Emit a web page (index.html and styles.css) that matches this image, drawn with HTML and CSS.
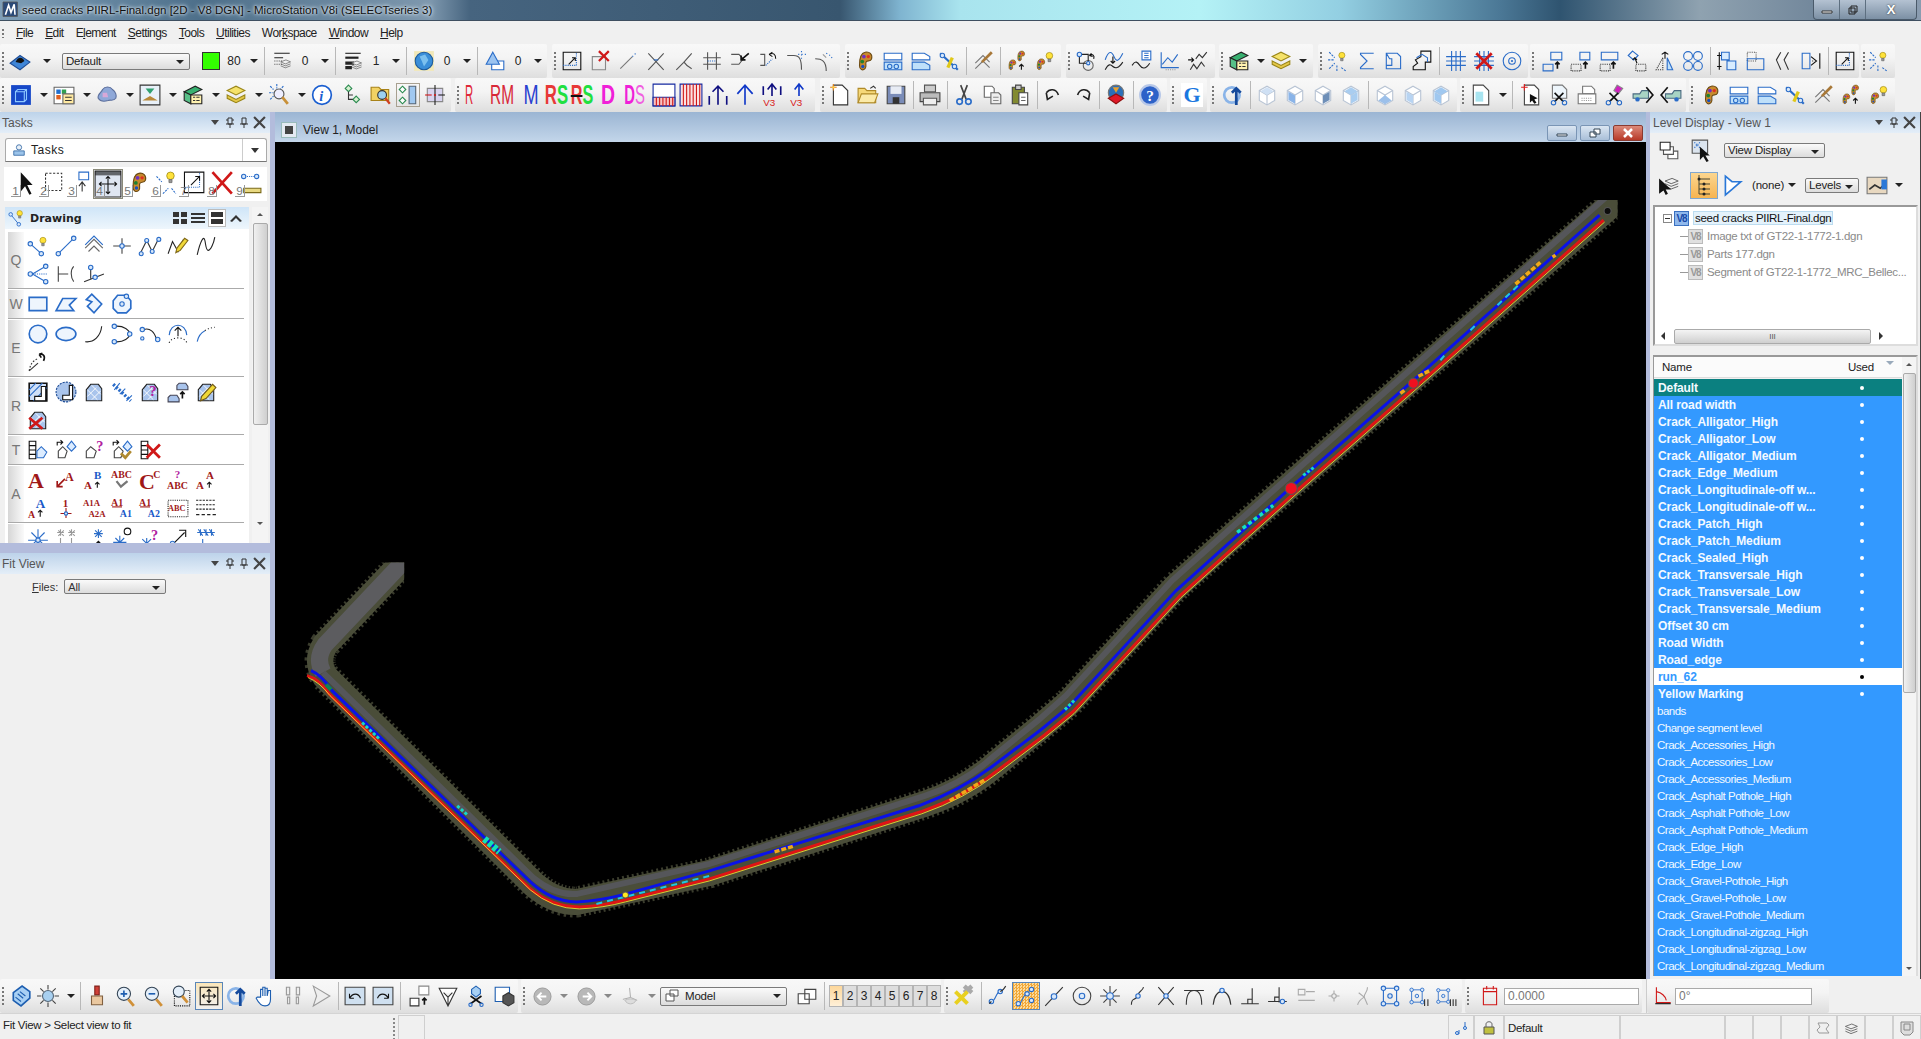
FILE: index.html
```html
<!DOCTYPE html>
<html lang="en">
<head>
<meta charset="utf-8">
<title>MicroStation V8i</title>
<link rel="stylesheet" href="styles.css">
</head>
<body>
<svg class="defs" aria-hidden="true">
  <symbol id="lay" viewBox="0 0 20 20"><path class="fl" d="M3 8l8-3 7 3-8 3z"/><path d="M3 11l7 3 8-3M3 14l7 3 8-3"/></symbol>
  <symbol id="pal" viewBox="0 0 20 20"><path fill="#c88a2c" stroke="#6b4a14" d="M10 2c4-1 7 2 6 6-1 3-4 1-5 3s1 4-1 6-5 1-5-3 0-11 5-12z"/><circle cx="9" cy="6" r="1.7" fill="#7030c0" stroke="none"/><circle cx="13" cy="6" r="1.5" fill="#e03020" stroke="none"/><circle cx="7.500" cy="10.500" r="1.700" fill="#208030" stroke="none"/><circle cx="8" cy="15" r="1.500" fill="#1850c0" stroke="none"/></symbol>
  <symbol id="bulb" viewBox="0 0 20 20"><circle cx="10" cy="7" r="5" fill="#ffe23a" stroke="#9a8410"/><path fill="#999" stroke="#666" d="M8 12h4v4H8z"/></symbol>
  <symbol id="cube" viewBox="0 0 20 20"><path fill="#fff" stroke="#b8c4d4" d="M3 6l7-4 7 4v9l-7 4-7-4z"/><path stroke="#b8c4d4" d="M3 6l7 4 7-4M10 10v9"/></symbol>
  <symbol id="hat" viewBox="0 0 20 20"><path fill="#a9c4ec" stroke="#222" d="M3 18V8l4-5h7l3 4v11z"/><path stroke="#fff" stroke-width=".8" d="M4 8l9 9M8 4l8 8M4 14l8-8M8 17l8-8"/></symbol>
  <symbol id="dot" viewBox="0 0 20 20"><path class="u" d="M4 15C8 15 8 6 12 6"/><circle class="n" cx="4" cy="15" r="2"/><circle class="n" cx="12" cy="6" r="2"/></symbol>
  <symbol id="snapb" viewBox="0 0 20 20"><path class="u" d="M4 3h12v14H4z"/><circle class="n" cx="4" cy="3" r="2"/><circle class="n" cx="16" cy="3" r="2"/><circle class="n" cx="4" cy="17" r="2"/><circle class="n" cx="16" cy="17" r="2"/><circle class="n" cx="10" cy="10" r="2"/></symbol>
</svg>
<div class="app">

<header class="title">
  <svg class="logo" viewBox="0 0 20 20"><path fill="#2a4a78" d="M0 0h18v18H0z"/><path fill="none" stroke="#fff" stroke-width="2" d="M3 16 7 4l3 9 4-10 1 13"/></svg>
  <span class="title-text">seed cracks PIIRL-Final.dgn [2D - V8 DGN] - MicroStation V8i (SELECTseries 3)</span>
  <div class="win-btns">
    <span class="wb"><svg viewBox="0 0 12 10"><path fill="#fff" stroke="#333" d="M1 6h10v2H1z"/></svg></span>
    <span class="wb"><svg viewBox="0 0 12 10"><path fill="none" stroke="#222" d="M4 1h6v6H4zM2 3h6v6H2z"/></svg></span>
    <span class="wb wb-x">X</span>
  </div>
</header>

<nav class="menu">
  <i class="grip"></i>
  <span><u>F</u>ile</span><span><u>E</u>dit</span><span>E<u>l</u>ement</span><span><u>S</u>ettings</span><span><u>T</u>ools</span><span><u>U</u>tilities</span><span>Wor<u>k</u>space</span><span><u>W</u>indow</span><span><u>H</u>elp</span>
</nav>

<div class="tb">
  <div class="g g1">
    <i class="grip"></i>
    <i class="b"><svg viewBox="0 0 20 20"><path fill="#3f86d8" stroke="#1f4d96" d="M1 12 10 5l9 6-9 7z"/><path fill="#111" stroke="none" d="M6 11c2-5 6-5 8-1l-3 2z"/></svg></i>
    <i class="a m4"></i>
    <div class="combo w128">Default</div>
    <i class="sw"></i><span class="num n28">80</span><i class="a"></i><i class="sep"></i>
    <i class="b"><svg viewBox="0 0 20 20"><path d="M3 3h14M3 7h8" stroke="#222"/><path stroke-dasharray="1 1" d="M3 10h7M3 13h7"/><use href="#lay" x="7" y="6" width="12" height="12"/></svg></i><span class="num">0</span><i class="a"></i><i class="sep"></i>
    <i class="b"><svg viewBox="0 0 20 20"><path stroke="#222" d="M3 3h14"/><path stroke="#222" stroke-width="2" d="M3 7h12"/><path stroke="#222" stroke-width="3" d="M3 12h8M3 16h6"/><use href="#lay" x="7" y="7" width="12" height="12"/></svg></i><span class="num">1</span><i class="a"></i><i class="sep"></i>
    <i class="b"><svg viewBox="0 0 20 20"><path fill="#f2e8b8" stroke="none" d="M1 1h18v18H1z"/><circle cx="10" cy="10" r="8" fill="#3a8ed8" stroke="#1d5a9c"/><path fill="#7cc0ee" stroke="none" d="M6 6l5-2 3 5-4 6-2-5z"/></svg></i><span class="num">0</span><i class="a"></i><i class="sep"></i>
    <i class="b"><svg viewBox="0 0 20 20"><path fill="#fff" class="u" d="M7 10h11v8H7z"/><path fill="#9cc4f0" class="u" d="M8 2l6 11H2z"/></svg></i><span class="num">0</span><i class="a"></i>
  </div>
  <div class="g g2">
    <i class="grip"></i>
    <i class="b"><svg viewBox="0 0 20 20"><path stroke="#111" d="M2 2h16v16H2z"/><path stroke="#2a6cc8" stroke-dasharray="1 1" d="M2 14h12V2"/><path stroke="#111" d="M7 13l6-6M10 7h3v3"/></svg></i>
    <i class="b"><svg viewBox="0 0 20 20"><path stroke="#888" d="M3 6h12v12H3z"/><path stroke="#d01818" stroke-width="2" d="M9 1l9 9M18 1l-9 9"/></svg></i>
    <i class="b"><svg viewBox="0 0 20 20"><path stroke="#777" d="M3 17 14 6"/><path stroke="#2a6cc8" stroke-dasharray="1 2" d="M14 6l4-4"/></svg></i>
    <i class="b"><svg viewBox="0 0 20 20"><path stroke="#555" d="M3 3l14 15M17 3 3 18"/><path stroke="#2a6cc8" d="M8 9l4 0"/></svg></i>
    <i class="b"><svg viewBox="0 0 20 20"><path stroke="#555" d="M3 18 10 11M17 3l-7 8c2 3 5 5 7 6"/></svg></i>
    <i class="b"><svg viewBox="0 0 20 20"><path stroke="#555" d="M6 2v16M14 2v16M2 7h16M2 13h16"/><path stroke="#2a6cc8" stroke-dasharray="1 1" d="M6 10h8"/></svg></i>
    <i class="b"><svg viewBox="0 0 20 20"><path stroke="#555" d="M2 4h7l4 4-4 5H2"/><path stroke="#111" stroke-width="1.500" d="M18 3l-7 6M11 5v4h4"/></svg></i>
    <i class="b"><svg viewBox="0 0 20 20"><path stroke="#555" d="M3 4h4v10H3"/><path stroke="#2a6cc8" stroke-dasharray="1 1" d="M8 14l6-6"/><path stroke="#111" d="M11 4c4-2 6 0 6 4M11 4l3-2M11 4l3 2"/></svg></i>
    <i class="b"><svg viewBox="0 0 20 20"><path stroke="#555" d="M2 5h6c5 0 7 3 7 13"/><path stroke="#2a6cc8" stroke-dasharray="1 2" d="M15 1v7M12 4h7"/></svg></i>
    <i class="b"><svg viewBox="0 0 20 20"><path stroke="#555" d="M2 8c6 0 10 2 10 11"/><path stroke="#2a6cc8" stroke-dasharray="1 2" d="M12 3c3 1 5 3 6 6"/><path stroke="#999" d="M9 4l3 3"/></svg></i>
  </div>
  <div class="g g3">
    <i class="grip"></i>
    <i class="b"><svg viewBox="0 0 20 20"><use href="#pal"/></svg></i>
    <i class="b"><svg viewBox="0 0 20 20"><path class="u" fill="#fff" d="M2 3h16v6H2z"/><path class="u" fill="#bfe0fa" d="M2 11h16v7H2z"/><circle class="u" cx="7" cy="15" r="2"/><circle class="u" cx="13" cy="15" r="2"/></svg></i>
    <i class="b"><svg viewBox="0 0 20 20"><path class="u" fill="#fff" d="M2 3h11l5 3v3H2z"/><path class="u" fill="#bfe0fa" d="M2 11h11l5 3v4H2z"/></svg></i>
    <i class="b"><svg viewBox="0 0 20 20"><path stroke="#2a6cc8" stroke-width="2" d="M2 3l16 15"/><path stroke="#e0c818" stroke-width="3" d="M13 7l-4 9"/><circle class="n" cx="4" cy="5" r="2"/><circle class="n" cx="15" cy="15" r="2"/></svg></i>
    <i class="sep s3"></i>
    <i class="b"><svg viewBox="0 0 20 20"><path stroke="#777" d="M3 12l7-7 6 6M3 17l7-7 6 6"/><path stroke="#a87838" stroke-width="2.500" d="M18 2 9 11"/></svg></i>
    <i class="sep s3"></i>
    <i class="b"><svg viewBox="0 0 20 20"><use href="#pal" x="8" y="0" width="11" height="11"/><use href="#pal" x="0" y="8" width="11" height="11"/><path stroke="#111" d="M14 18v-5M12 15l2-2 2 2"/></svg></i>
    <i class="b"><svg viewBox="0 0 20 20"><use href="#pal" x="0" y="7" width="12" height="12"/><use href="#bulb" x="8" y="0" width="12" height="14"/></svg></i>
  </div>
  <div class="g g4">
    <i class="grip"></i>
    <i class="b"><svg viewBox="0 0 20 20"><circle cx="12" cy="14" r="4.500" stroke="#666"/><path stroke="#222" d="M4 4h8v8H4z"/><circle class="n" cx="4" cy="4" r="2"/><circle class="n" cx="12" cy="12" r="1.500"/><path stroke="#111" d="M13 5c3-2 5 0 4 3M13 5l2-2M13 5l3 1"/></svg></i>
    <i class="b"><svg viewBox="0 0 20 20"><path class="u" d="M2 9c3-9 6-8 8-3s4 5 8-3"/><path stroke="#222" d="M2 18c3-6 5-5 7-3s5 2 9-4"/><path stroke="#111" d="M9 6v6M7 10l2 2 2-2"/></svg></i>
    <i class="b"><svg viewBox="0 0 20 20"><path class="u" fill="#fff" d="M10 1h8v8h-8z"/><path class="u" d="M12 3h4M12 5h4M12 7h4"/><path stroke="#222" d="M1 14c3-5 5-3 7 0s5 4 9-2"/></svg></i>
    <i class="b"><svg viewBox="0 0 20 20"><path class="u" d="M2 2v14h16"/><path class="u" d="M3 13l5-6 4 4 5-7"/><path stroke="#999" stroke-dasharray="1 1" d="M6 18h9"/></svg></i>
    <i class="b"><svg viewBox="0 0 20 20"><path stroke="#333" d="M3 18l3-5 3 4 4-6 3 4M8 8l3-4 3 3 4-5"/><path stroke="#111" d="M1 9h5M4 7l2 2-2 2"/></svg></i>
  </div>
  <div class="g g5">
    <i class="grip"></i>
    <i class="b"><svg viewBox="0 0 20 20"><path fill="#38b070" stroke="#222" d="M2 7l10-5 6 3-10 5z"/><path fill="#58c088" stroke="#222" d="M2 7l6 3v8l-6-3z"/><path fill="#fff2b0" stroke="#222" d="M8 10h10v8H8z"/><path stroke="#333" d="M10 12h2M10 15h2M13 12h3M13 15h3"/></svg></i>
    <i class="a"></i>
    <i class="b"><svg viewBox="0 0 20 20"><path fill="#f5e26a" stroke="#9a8618" d="M2 6l8-4 8 4-8 4z"/><path fill="#e5c848" stroke="#9a8618" d="M2 10l8 4 8-4v3l-8 4-8-4z"/></svg></i>
    <i class="a"></i>
  </div>
  <div class="g g6">
    <i class="grip"></i>
    <i class="b"><svg viewBox="0 0 20 20"><use href="#bulb" x="8" y="0" width="11" height="13"/><path class="u" stroke-dasharray="2 1" d="M2 2l5 5M1 9h5M2 17l5-5M9 14v5M13 16l4 3"/></svg></i>
    <i class="b"><svg viewBox="0 0 20 20"><path class="u" d="M17 3H5v1l6 6-6 6v1h12"/></svg></i>
    <i class="b"><svg viewBox="0 0 20 20"><path class="u" d="M3 3h10l3 3v11H3zM3 3l3 5h2v6H3"/></svg></i>
    <i class="b"><svg viewBox="0 0 20 20"><path stroke="#111" d="M9 1h9v10h-5v7H2v-3l4-3-2-3 5-3z"/><path class="u" d="M5 7l5-3 5 3v4"/></svg></i>
    <i class="sep s3"></i>
    <i class="b"><svg viewBox="0 0 20 20"><path class="u" d="M6 1v18M10 1v18M14 1v18M1 6h18M1 10h18M1 14h18"/></svg></i>
    <i class="b"><svg viewBox="0 0 20 20"><path class="u" d="M6 1v18M10 1v18M14 1v18M1 6h18M1 10h18M1 14h18"/><path stroke="#d01818" stroke-width="2.500" d="M3 3l14 14M17 3 3 17"/></svg></i>
    <i class="b"><svg viewBox="0 0 20 20"><circle class="u" cx="10" cy="10" r="8"/><circle class="u" cx="10" cy="10" r="3"/><circle cx="10" cy="10" r="1" fill="#2a6cc8" stroke="none"/></svg></i>
  </div>
  <div class="g g7">
    <i class="grip"></i>
    <i class="b"><svg viewBox="0 0 20 20"><path class="u" d="M8 2h10v7H8zM1 13h9v6H1z"/><path stroke="#111" stroke-width="1.500" d="M14 17v-6M12 13l2-2 2 2"/></svg></i>
    <i class="b"><svg viewBox="0 0 20 20"><path class="u" d="M9 2h9v7H9z"/><path stroke="#333" stroke-dasharray="1 1" d="M1 13h9v6H1z"/><path stroke="#111" stroke-width="1.500" d="M14 17v-6M12 13l2-2 2 2"/></svg></i>
    <i class="b"><svg viewBox="0 0 20 20"><path class="u" d="M3 2h15v7H3z"/><path stroke="#333" stroke-dasharray="1 1" d="M2 13h9v6H2z"/><path stroke="#111" stroke-width="1.500" d="M14 17v-6M12 13l2-2 2 2"/></svg></i>
    <i class="b"><svg viewBox="0 0 20 20"><path class="u" d="M6 1l5 4-4 4-5-4z"/><path stroke="#333" stroke-dasharray="1 1" d="M9 13h9v6H9z"/><path stroke="#111" d="M10 12 8 7M6 9l2-2 2 2"/></svg></i>
    <i class="b"><svg viewBox="0 0 20 20"><path class="u" fill="#bfe0fa" d="M12 7l5 11h-5z"/><path stroke="#333" stroke-dasharray="1 1" d="M8 7 2 18h6z"/><path stroke="#111" d="M10 8V2M7 4l3-2 3 2"/></svg></i>
    <i class="b"><svg viewBox="0 0 20 20"><circle class="u" cx="5.500" cy="5.500" r="4"/><circle class="u" cx="14.500" cy="5.500" r="4"/><circle class="u" cx="5.500" cy="14.500" r="4"/><circle class="u" cx="14.500" cy="14.500" r="4"/></svg></i>
    <i class="sep s3"></i>
    <i class="b"><svg viewBox="0 0 20 20"><path stroke="#111" d="M3 2v16M1 5h4M1 15h4"/><path class="u" fill="#d8ecff" d="M5 2h7v7H5zM10 10h8v8h-8z"/></svg></i>
    <i class="b"><svg viewBox="0 0 20 20"><path stroke="#555" stroke-dasharray="1 1" d="M3 2h8v8H3z"/><path class="u" d="M3 8h15v10H3z"/></svg></i>
    <i class="b"><svg viewBox="0 0 20 20"><path stroke="#333" d="M8 2 4 9l4 9M15 2l-4 7 4 9"/></svg></i>
    <i class="b"><svg viewBox="0 0 20 20"><path class="u" d="M2 3h7v14H2z"/><path stroke="#333" stroke-dasharray="1 1" d="M11 10h1"/><path stroke="#111" d="M18 3v14M10 6l5 4-5 4"/></svg></i>
    <i class="sep s3"></i>
    <i class="b"><svg viewBox="0 0 20 20"><path stroke="#111" d="M2 2h16v16H2z"/><path stroke="#2a6cc8" stroke-dasharray="1 1" d="M2 14h12V2"/><path stroke="#111" d="M7 13l6-6M10 7h3v3"/></svg></i>
  </div>
  <div class="g g8">
    <i class="grip"></i>
    <i class="b"><svg viewBox="0 0 20 20"><use href="#bulb" x="8" y="0" width="11" height="13"/><path class="u" stroke-dasharray="2 1" d="M2 2l5 5M1 9h5M2 17l5-5M9 14v5M13 16l4 3"/></svg></i>
  </div>
</div>

<div class="tb">
  <div class="g h1">
    <i class="grip"></i>
    <i class="b"><svg viewBox="0 0 20 20"><path fill="#1648c8" stroke="none" d="M1 1h18v18H1z"/><path stroke="#8fc8ff" d="M5 7l2-2h8v9l-2 2H5zM5 7h8v9M13 7l2-2"/></svg></i>
    <i class="a"></i>
    <i class="b"><svg viewBox="0 0 20 20"><path fill="#fff" stroke="#666" d="M1 3h18v15H1z"/><path fill="#2070d0" stroke="none" d="M3 5h4v4H3z"/><path fill="#30a050" stroke="none" d="M8 5h4v4H8z"/><path fill="#e06020" stroke="none" d="M3 10h4v4H3z"/><path fill="#ffe9a0" stroke="#666" d="M9 9h10v9H9z"/><path stroke="#333" d="M11 12h6M11 15h6"/></svg></i>
    <i class="a"></i>
    <i class="b"><svg viewBox="0 0 20 20"><path fill="#8fa8d8" stroke="#5c6f9c" d="M2 13c-1-4 3-5 4-8 2-3 7-3 9 0 3 2 4 6 3 8-2 3-5 1-7 2-3 1-7 1-9-2z"/><path fill="#d8a8d8" stroke="none" d="M6 8h4l1 4H6z"/></svg></i>
    <i class="a"></i>
    <i class="b"><svg viewBox="0 0 20 20"><path fill="#e8f0f8" stroke="#333" d="M1 1h18v18H1z"/><path fill="#b88838" stroke="none" d="M3 15l7-4 7 4z"/><path fill="#30a070" stroke="none" d="M6 4h8l-4 5z"/></svg></i>
    <i class="a"></i>
    <i class="b"><svg viewBox="0 0 20 20"><path fill="#38b070" stroke="#222" d="M2 7l10-5 6 3-10 5z"/><path fill="#58c088" stroke="#222" d="M2 7l6 3v8l-6-3z"/><path fill="#fff2b0" stroke="#222" d="M8 10h10v8H8z"/><path stroke="#333" d="M10 12h2M10 15h2M13 12h3M13 15h3"/></svg></i>
    <i class="a"></i>
    <i class="b"><svg viewBox="0 0 20 20"><path fill="#f5e26a" stroke="#9a8618" d="M2 6l8-4 8 4-8 4z"/><path fill="#e5c848" stroke="#9a8618" d="M2 10l8 4 8-4v3l-8 4-8-4z"/></svg></i>
    <i class="a"></i>
    <i class="b"><svg viewBox="0 0 20 20"><path class="u" stroke-dasharray="2 1" d="M2 2l3 3M8 0v4M14 2l-3 3M1 8h4M2 14l3-3"/><circle cx="10" cy="9" r="4.500" stroke="#555" fill="#eef"/><path stroke="#c89038" stroke-width="2.500" d="M13 12l5 6"/></svg></i>
    <i class="a"></i>
    <i class="b"><svg viewBox="0 0 20 20"><circle cx="10" cy="10" r="8.500" stroke="#1a5ed0" stroke-width="1.500" fill="#fff"/><text class="t ti" x="7.500" y="15" font-size="13" fill="#1a5ed0">i</text></svg></i>
    <i class="b nw nw1"><svg viewBox="0 0 20 20"><path stroke="#2a8a50" fill="#d8f0d0" d="M5 1l3 3-3 3-3-3zM12 11l3 3-3 3-3-3z"/><path stroke="#333" d="M5 7v7h4M5 10h4"/></svg></i>
    <i class="b nw"><svg viewBox="0 0 20 20"><path fill="#f2d264" stroke="#a88218" d="M1 3h7l2 2h7v10H1z"/><circle cx="11" cy="10" r="4" fill="#9cd0f0" stroke="#333"/><path stroke="#d04020" stroke-width="2" d="M14 13l4 5"/></svg></i>
    <i class="b nw bx"><svg viewBox="0 0 20 20"><path fill="#fff" stroke="#2a8a50" d="M5 2l3 3-3 3-3-3zM5 12l3 3-3 3-3-3z"/><path fill="#a0c8f0" stroke="#567" d="M11 2h6v16h-6z"/></svg></i>
    <i class="b nw"><svg viewBox="0 0 20 20"><path fill="#d8d4f0" stroke="#888" d="M3 4h14v12H3z"/><path stroke="#222" d="M10 1v18"/><path stroke="#d01818" d="M1 10h6"/><path stroke="#222" d="M13 10h6"/><circle cx="10" cy="10" r="1" fill="#d01818" stroke="none"/></svg></i>
  </div>
  <div class="g h2">
    <i class="grip"></i>
    <span class="tx r1">R</span><span class="tx r2">RM</span><span class="tx r3">M</span><span class="tx r4"><em>R</em>S</span><span class="tx r5"><em class="slash">R</em>S</span><span class="tx r6">D</span><span class="tx r7"><em>D</em>S</span>
    <i class="b bl bl1"><svg viewBox="0 0 22 22"><path fill="#fff" stroke="#1428a0" d="M1 1h20v20H1z"/><path fill="#f8c0c0" stroke="#1428a0" d="M1 13h20v8H1z"/><path stroke="#d01818" d="M4 13v8M7 13v8M10 13v8M13 13v8M16 13v8M19 13v8"/></svg></i>
    <i class="b bl"><svg viewBox="0 0 22 22"><path fill="#fbe0e0" stroke="#1428a0" d="M1 1h20v20H1z"/><path stroke="#d01818" d="M4 1v20M7 1v20M10 1v20M13 1v20M16 1v20M19 1v20"/></svg></i>
    <i class="b bl"><svg viewBox="0 0 22 22"><path stroke="#101080" stroke-width="1.500" d="M11 20V3M6 8l5-5 5 5M3 12v8M19 12v8"/></svg></i>
    <i class="b bl"><svg viewBox="0 0 22 22"><path stroke="#1038c8" stroke-width="1.500" d="M11 20V2M4 10l7-8 7 8"/></svg></i>
    <i class="b bl"><svg viewBox="0 0 22 22"><path stroke="#101080" stroke-width="1.500" d="M11 12V1M7 6l4-5 4 5M3 3v8M19 3v8"/><text class="t rd" x="3" y="21" font-size="9">V3</text></svg></i>
    <i class="b bl"><svg viewBox="0 0 22 22"><path stroke="#1038c8" stroke-width="1.500" d="M11 12V1M7 6l4-5 4 5"/><text class="t rd" x="3" y="21" font-size="9">V3</text></svg></i>
  </div>
  <div class="g h3">
    <i class="grip"></i>
    <i class="b"><svg viewBox="0 0 20 20"><path fill="#fff" stroke="#333" d="M4 1h8l5 5v13H4z"/><path stroke="#e08020" d="M4 0v6M1 3h6"/><path fill="#ffd040" stroke="none" d="M3 2h2v2H3z"/></svg></i>
    <i class="b"><svg viewBox="0 0 20 20"><path fill="#f6d878" stroke="#b08a28" d="M1 4h6l2 2h8v11H1z"/><path fill="#fbeaa8" stroke="#b08a28" d="M1 17l3-8h15l-3 8z"/><path stroke="#333" d="M12 4l3-2 2 2"/></svg></i>
    <i class="b"><svg viewBox="0 0 20 20"><path fill="#7a8cb8" stroke="#444" d="M2 2h16v16H2z"/><path fill="#e8ecf4" stroke="none" d="M5 2h10v7H5z"/><path fill="#333" stroke="none" d="M7 12h6v6H7z"/></svg></i>
    <i class="sep s3"></i>
    <i class="b"><svg viewBox="0 0 20 20"><path fill="#ccc" stroke="#555" d="M5 1h10v6H5z"/><path fill="#bbb" stroke="#444" d="M1 8h18v8H1z"/><path fill="#eee" stroke="#555" d="M4 13h12v6H4z"/></svg></i>
    <i class="sep s3"></i>
    <i class="b"><svg viewBox="0 0 20 20"><path stroke="#444" stroke-width="1.500" d="M7 1l5 13M13 1 8 14"/><circle cx="6" cy="16" r="2.500" stroke="#2a6cc8" stroke-width="1.500"/><circle cx="14" cy="16" r="2.500" stroke="#2a6cc8" stroke-width="1.500"/></svg></i>
    <i class="b"><svg viewBox="0 0 20 20"><path fill="#fff" stroke="#666" d="M3 2h7l2 2v8H3z"/><path fill="#eee" stroke="#666" d="M9 8h7l2 2v8H9z"/><path stroke="#888" d="M11 12h5M11 15h5"/></svg></i>
    <i class="b"><svg viewBox="0 0 20 20"><path fill="#828a30" stroke="#444" d="M3 3h11v15H3z"/><path fill="#ccc" stroke="#444" d="M6 1h5v4H6z"/><path fill="#fff" stroke="#444" d="M9 8h8v11H9z"/><path stroke="#666" d="M11 12h4M11 15h4"/></svg></i>
    <i class="sep s3"></i>
    <i class="b"><svg viewBox="0 0 20 20"><path stroke="#222" stroke-width="1.500" d="M3 8c3-4 9-4 11 2M3 8l1 6 5-3"/></svg></i>
    <i class="b"><svg viewBox="0 0 20 20"><path stroke="#222" stroke-width="1.500" d="M17 8c-3-4-9-4-11 2M17 8l-1 6-5-3"/></svg></i>
    <i class="sep s3"></i>
    <i class="b"><svg viewBox="0 0 20 20"><circle cx="10" cy="8" r="7" fill="#2c6fb8" stroke="#777"/><path fill="#e8a030" stroke="none" d="M7 3h6l-3 5z"/><path fill="#e01828" stroke="#901010" d="M3 13l7-4 7 4-7 5z"/></svg></i>
    <i class="sep s3"></i>
    <i class="b"><svg viewBox="0 0 20 20"><circle cx="10" cy="10" r="9" fill="#2d62c8" stroke="#b8c8e8" stroke-width="2"/><text class="t wh" x="6.500" y="15" font-size="14">?</text></svg></i>
  </div>
  <div class="g h4"><i class="grip"></i><span class="gg">G</span></div>
  <div class="g h5">
    <i class="grip"></i>
    <i class="b"><svg viewBox="0 0 20 20"><circle cx="9" cy="10" r="7" fill="none" stroke="#8ab4e8" stroke-width="2.500"/><path stroke="#154a9c" stroke-width="2.500" d="M13 19V5M9 8l4-4 4 4"/></svg></i>
    <i class="sep s3"></i>
    <i class="b"><svg viewBox="0 0 20 20"><use href="#cube"/><path fill="#cfe0f4" stroke="none" d="M4 6.500 10 3l6 3.500-6 3.500z"/></svg></i>
    <i class="b"><svg viewBox="0 0 20 20"><use href="#cube"/><path fill="#8ab4e8" stroke="none" d="M4 7l6 3.500V18l-6-3.500z"/></svg></i>
    <i class="b"><svg viewBox="0 0 20 20"><use href="#cube"/><path fill="#6e8fb8" stroke="none" d="M16 7l-6 3.500V18l6-3.500z"/></svg></i>
    <i class="b"><svg viewBox="0 0 20 20"><use href="#cube"/><path fill="#a9cdf0" stroke="none" d="M4 6.500 10 3l6 3.500-6 3.500zM16 7l-6 3.500V18l6-3.500z"/></svg></i>
    <i class="sep s3"></i>
    <i class="b"><svg viewBox="0 0 20 20"><use href="#cube"/><path fill="#9cc0ea" stroke="none" d="M4 15l6-5 6 5-6 3.500z"/></svg></i>
    <i class="b"><svg viewBox="0 0 20 20"><use href="#cube"/><path fill="#b8d4f2" stroke="none" d="M4 7l6 3.500V18l-6-3.500z"/></svg></i>
    <i class="b"><svg viewBox="0 0 20 20"><use href="#cube"/><path fill="#a0c8f0" stroke="none" d="M4 6.500 10 3l6 3.500-6 3.500zM4 7l6 3.500V18l-6-3.500z"/></svg></i>
  </div>
  <div class="g h6">
    <i class="grip"></i>
    <i class="b"><svg viewBox="0 0 20 20"><path fill="#fff" stroke="#444" d="M3 1h9l5 5v13H3z"/><path fill="#a8e4f0" stroke="none" d="M5 7h7v9H5z"/></svg></i>
    <i class="a"></i><i class="sep s3"></i>
    <i class="b"><svg viewBox="0 0 20 20"><path fill="#fff" stroke="#444" d="M4 1h9l4 4v14H4z"/><path stroke="#e02020" d="M4 0v6M1 3h6"/><path fill="#111" stroke="none" d="M9 9l7 4-3 1 2 3-2 1-2-3-2 2z"/></svg></i>
    <i class="b"><svg viewBox="0 0 20 20"><path fill="#eef6fc" stroke="#777" d="M4 1h9l4 4v8H4z"/><path stroke="#111" stroke-width="1.500" d="M6 8l8 8M14 8l-8 8"/><circle cx="5" cy="17" r="2" stroke="#2a6cc8"/><circle cx="15" cy="17" r="2" stroke="#2a6cc8"/></svg></i>
    <i class="b"><svg viewBox="0 0 20 20"><path fill="#fff" stroke="#777" d="M6 2h8l3 3v4H6z"/><path fill="#fff" stroke="#777" d="M2 9h16v9H2z"/><path stroke="#999" stroke-dasharray="1 1" d="M5 13h10M5 15h10"/></svg></i>
    <i class="b"><svg viewBox="0 0 20 20"><path fill="#d020c0" stroke="#888" d="M12 1l5 3-4 5-4-3z"/><path stroke="#111" stroke-width="1.500" d="M5 8l8 8M13 8l-8 8"/><circle cx="4" cy="17" r="2" stroke="#2a6cc8"/><circle cx="14" cy="17" r="2" stroke="#2a6cc8"/></svg></i>
    <i class="b"><svg viewBox="0 0 20 20"><path fill="#a8d4c4" stroke="#4a6a80" d="M1 9h6l2-3h6v7H1z"/><circle cx="5" cy="14" r="2" fill="#2a6cc8" stroke="none"/><path stroke="#111" stroke-width="1.500" d="M13 3l6 7-6 7"/></svg></i>
    <i class="b"><svg viewBox="0 0 20 20"><path fill="#a8d4c4" stroke="#4a6a80" d="M5 9h6l2-3h6v7H5z"/><circle cx="15" cy="14" r="2" fill="#2a6cc8" stroke="none"/><path stroke="#111" stroke-width="1.500" d="M7 3 1 10l6 7"/></svg></i>
  </div>
  <div class="g h7">
    <i class="grip"></i>
    <i class="b"><svg viewBox="0 0 20 20"><use href="#pal"/></svg></i>
    <i class="b"><svg viewBox="0 0 20 20"><path class="u" fill="#fff" d="M2 3h16v6H2z"/><path class="u" fill="#bfe0fa" d="M2 11h16v7H2z"/><circle class="u" cx="7" cy="15" r="2"/><circle class="u" cx="13" cy="15" r="2"/></svg></i>
    <i class="b"><svg viewBox="0 0 20 20"><path class="u" fill="#fff" d="M2 3h11l5 3v3H2z"/><path class="u" fill="#bfe0fa" d="M2 11h11l5 3v4H2z"/></svg></i>
    <i class="b"><svg viewBox="0 0 20 20"><path stroke="#2a6cc8" stroke-width="2" d="M2 3l16 15"/><path stroke="#e0c818" stroke-width="3" d="M13 7l-4 9"/><circle class="n" cx="4" cy="5" r="2"/><circle class="n" cx="15" cy="15" r="2"/></svg></i>
    <i class="b"><svg viewBox="0 0 20 20"><path stroke="#777" d="M3 12l7-7 6 6M3 17l7-7 6 6"/><path stroke="#a87838" stroke-width="2.500" d="M18 2 9 11"/></svg></i>
    <i class="b"><svg viewBox="0 0 20 20"><use href="#pal" x="8" y="0" width="11" height="11"/><use href="#pal" x="0" y="8" width="11" height="11"/><path stroke="#111" d="M14 18v-5M12 15l2-2 2 2"/></svg></i>
    <i class="b"><svg viewBox="0 0 20 20"><use href="#pal" x="0" y="7" width="12" height="12"/><use href="#bulb" x="8" y="0" width="12" height="14"/></svg></i>
  </div>
</div>

<main class="main">
  <aside class="left">
    <div class="dock tasks-dock">
      <div class="dock-head"><span>Tasks</span><div class="ctl"><i class="tri"></i><svg viewBox="0 0 10 12"><path d="M3 1h4v6H3zM1 7h8M5 7v4M1 3h2M7 3h2"/></svg><svg viewBox="0 0 10 12"><path d="M3 1h4v6H3zM1 7h8M5 7v4"/></svg><svg class="x" viewBox="0 0 12 12"><path d="M1 1l10 10M11 1 1 11"/></svg></div></div>
      <div class="taskcombo"><svg viewBox="0 0 16 16"><path fill="#9cc4ea" stroke="#3a6ea8" d="M2 9h12v5H2z"/><circle cx="8" cy="5" r="3" fill="#e8f0f8" stroke="#3a6ea8"/></svg><span>Tasks</span><i class="tc-arrow"></i></div>
      <div class="toolrow">
        <i class="k"><svg viewBox="0 0 26 26"><path fill="#111" stroke="none" d="M10 2v18l4-5 4 8 2-1-4-8h5z"/><text class="t dg" x="2" y="23" font-size="11">1</text></svg></i>
        <i class="k"><svg viewBox="0 0 26 26"><path stroke="#333" stroke-dasharray="2 1.500" d="M7 3h15v16H7z"/><text class="t dg" x="2" y="23" font-size="11">2</text></svg></i>
        <i class="k"><svg viewBox="0 0 26 26"><path stroke="#2a6cc8" fill="#fff" d="M12 2h9v7h-9z"/><path stroke="#333" d="M15 11v9M12 15l3-4 3 4"/><text class="t dg" x="2" y="23" font-size="11">3</text></svg></i>
        <i class="k sel"><svg viewBox="0 0 26 26"><path fill="#dfe6f2" stroke="#222" d="M1 1h24v24H1z"/><path fill="#111" stroke="none" d="M1 1h24v4H1z" opacity=".6"/><path stroke="#111" d="M13 6v16M5 13h16M11 8l2-2 2 2M11 20l2 2 2-2M7 11l-2 2 2 2M19 11l2 2-2 2"/><text class="t dg" x="2" y="23" font-size="11">4</text></svg></i>
        <i class="k"><svg viewBox="0 0 26 26"><use href="#pal" x="5" y="1" width="21" height="21"/><text class="t dg" x="2" y="23" font-size="11">5</text></svg></i>
        <i class="k"><svg viewBox="0 0 26 26"><use href="#bulb" x="12" y="0" width="14" height="15"/><path class="u" stroke-dasharray="2 1" d="M6 6l5 5M12 22l5-5M20 17l4 5"/><text class="t dg" x="2" y="23" font-size="11">6</text></svg></i>
        <i class="k"><svg viewBox="0 0 26 26"><path stroke="#111" d="M6 2h18v19H6z"/><path stroke="#2a6cc8" stroke-dasharray="1 1" d="M6 16h14V2"/><path stroke="#111" d="M12 14l8-8M16 6h4v4"/><text class="t dg" x="2" y="23" font-size="11">7</text></svg></i>
        <i class="k"><svg viewBox="0 0 26 26"><path stroke="#d01818" stroke-width="2.500" d="M6 2l18 20M24 2 6 22"/><text class="t dg" x="2" y="23" font-size="11">8</text></svg></i>
        <i class="k"><svg viewBox="0 0 26 26"><path stroke="#2a6cc8" stroke-dasharray="1 1" d="M10 6h10"/><circle class="n" cx="9" cy="6" r="2"/><circle class="n" cx="21" cy="6" r="2"/><path fill="#e8d880" stroke="#7a6818" d="M9 17h16v4H9z"/><text class="t dg" x="2" y="23" font-size="11">9</text></svg></i>
      </div>
      <div class="draw">
        <div class="draw-main">
          <div class="draw-head">
            <svg class="dh-ic" viewBox="0 0 20 20"><use href="#bulb" x="7" y="0" width="12" height="13"/><path class="u" d="M3 6l9 11"/><circle class="n" cx="3" cy="6" r="2"/><circle class="n" cx="12" cy="17" r="2"/></svg>
            <strong>Drawing</strong>
            <div class="view-ic"><svg viewBox="0 0 14 14"><path fill="#333" d="M0 1h6v5H0zM8 1h6v5H8zM0 8h6v5H0zM8 8h6v5H8z"/></svg><svg viewBox="0 0 14 14"><path fill="#333" d="M0 2h14v2H0zM0 6h14v2H0zM0 10h14v2H0z"/></svg><svg class="on" viewBox="0 0 16 16"><path fill="#333" d="M2 2h12v5H2zM2 9h12v5H2z"/></svg><svg viewBox="0 0 14 14"><path fill="#333" d="M1 10l6-6 6 6-2 1-4-4-4 4z"/></svg></div>
          </div>
          <div class="sec"><div class="ltr">Q</div><div class="tools">
            <i class="d"><svg viewBox="0 0 20 20"><use href="#bulb" x="9" y="0" width="11" height="13"/><path class="u" d="M3 8l10 9"/><circle class="n" cx="3" cy="8" r="2"/><circle class="n" cx="13" cy="17" r="2"/></svg></i>
            <i class="d"><svg viewBox="0 0 20 20"><path class="u" d="M3 17 17 3"/><circle class="n" cx="3" cy="17" r="2"/><circle class="n" cx="17" cy="3" r="2"/></svg></i>
            <i class="d"><svg viewBox="0 0 20 20"><path stroke="#666" d="M2 12l8-8 8 8M5 15l5-5 5 5"/><path class="u" d="M2 9l8-8 8 8"/></svg></i>
            <i class="d"><svg viewBox="0 0 20 20"><path stroke="#444" d="M2 10h16M10 3v14"/><circle class="n" cx="10" cy="10" r="2"/></svg></i>
            <i class="d"><svg viewBox="0 0 20 20"><path stroke="#333" d="M1 17 7 5l5 10 6-12"/><circle class="n" cx="2" cy="17" r="1.800"/><circle class="n" cx="7" cy="5" r="1.800"/><circle class="n" cx="12" cy="15" r="1.800"/><circle class="n" cx="18" cy="4" r="1.800"/></svg></i>
            <i class="d"><svg viewBox="0 0 20 20"><path stroke="#222" d="M1 17l4-11 5 9 5-11"/><path fill="#f0d838" stroke="#806818" d="M9 12l7-9 3 2-7 9-4 2z"/></svg></i>
            <i class="d"><svg viewBox="0 0 20 20"><path stroke="#222" d="M2 18C5 5 8 0 9 5s1 9 3 9 5-6 6-12"/></svg></i>
            <i class="d"><svg viewBox="0 0 20 20"><path class="u" d="M5 10 17 3M5 10l12 7"/><path class="u" stroke-dasharray="1 1" d="M5 10h13"/><circle class="n" cx="3" cy="10" r="2"/><circle class="n" cx="17" cy="3" r="2"/><circle class="n" cx="17" cy="17" r="2"/></svg></i>
            <i class="d"><svg viewBox="0 0 20 20"><path stroke="#444" d="M3 3v14M3 10h9M17 3c-3 3-3 10 0 14"/></svg></i>
            <i class="d"><svg viewBox="0 0 20 20"><path stroke="#333" d="M1 17 19 10M7 4v10"/><circle class="n" cx="7" cy="4" r="2"/><circle class="n" cx="11" cy="13" r="2"/></svg></i>
          </div></div>
          <div class="sec"><div class="ltr">W</div><div class="tools">
            <i class="d"><svg viewBox="0 0 20 20"><path class="ub" d="M2 4h16v12H2z"/></svg></i>
            <i class="d"><svg viewBox="0 0 20 20"><path class="ub" d="M1 16l6-11h12l-6 6 4 5z"/></svg></i>
            <i class="d"><svg viewBox="0 0 20 20"><path class="ub" d="M3 6l5-5 9 9-7 8-6-6 4-4z"/></svg></i>
            <i class="d"><svg viewBox="0 0 20 20"><path class="ub" d="M6 2h8l4 5v7l-4 4H6l-4-4V7z"/><circle class="n" cx="10" cy="10" r="2"/><circle class="n" cx="14" cy="3" r="2"/></svg></i>
          </div></div>
          <div class="sec"><div class="ltr">E</div><div class="tools">
            <i class="d"><svg viewBox="0 0 20 20"><circle class="ub" cx="10" cy="10" r="8"/></svg></i>
            <i class="d"><svg viewBox="0 0 20 20"><ellipse class="ub" cx="10" cy="10" rx="9" ry="6"/></svg></i>
            <i class="d"><svg viewBox="0 0 20 20"><path stroke="#222" d="M2 17c8 1 14-5 15-14"/></svg></i>
            <i class="d"><svg viewBox="0 0 20 20"><path stroke="#222" d="M3 3c9-1 14 4 14 7s-5 8-14 7"/><circle class="n" cx="3" cy="3" r="2"/><circle class="n" cx="17" cy="10" r="2"/><circle class="n" cx="3" cy="17" r="2"/></svg></i>
            <i class="d"><svg viewBox="0 0 20 20"><path stroke="#222" d="M4 6c6-2 10 2 12 9"/><circle class="n" cx="3" cy="6" r="2"/><circle class="n" cx="17" cy="15" r="2"/><circle class="n" cx="3" cy="14" r="1.500"/></svg></i>
            <i class="d"><svg viewBox="0 0 20 20"><path class="u" d="M2 11c1-12 15-12 16 0"/><path stroke="#111" d="M10 12V4M7 7l3-3 3 3"/><path stroke="#222" stroke-dasharray="1 2" d="M2 18c2-6 14-6 16 0"/></svg></i>
            <i class="d"><svg viewBox="0 0 20 20"><path class="u" d="M2 17c1-5 3-8 7-10"/><path stroke="#333" stroke-dasharray="1 2" d="M9 7c3-2 6-3 9-3"/></svg></i>
            <i class="d"><svg viewBox="0 0 20 20"><path stroke="#333" stroke-dasharray="1.500 1.500" d="M2 18c1-6 3-9 8-11"/><path stroke="#333" d="M2 18l8-7"/><path stroke="#111" stroke-width="1.500" d="M11 3c4-1 6 2 4 6M11 3l3-1M11 3l2 3"/></svg></i>
          </div></div>
          <div class="sec"><div class="ltr">R</div><div class="tools">
            <i class="d"><svg viewBox="0 0 20 20"><path fill="#cfe0f8" stroke="#111" stroke-width="1.500" d="M2 2h16v16H2z"/><path stroke="#2a6cc8" d="M2 8l6-6M2 14 14 2M6 18l12-12"/><path fill="#fff" stroke="#111" d="M13 5v9H7v4h10V5z"/></svg></i>
            <i class="d"><svg viewBox="0 0 20 20"><circle cx="10" cy="10" r="9" fill="#a9c4ec" stroke="#1f4d96" stroke-dasharray="2 1"/><path fill="#fff" stroke="#111" d="M13 4v9H7v4h9V4z"/></svg></i>
            <i class="d"><svg viewBox="0 0 20 20"><use href="#hat"/></svg></i>
            <i class="d"><svg viewBox="0 0 20 20"><path stroke="#2a6cc8" stroke-width="3" stroke-dasharray="2 1.500" d="M2 3l16 15"/><path stroke="#2a6cc8" d="M3 8l5-6M8 12l5-5M14 18l5-5"/></svg></i>
            <i class="d"><svg viewBox="0 0 20 20"><use href="#hat"/><text class="t mg" x="9" y="14" font-size="14">?</text></svg></i>
            <i class="d"><svg viewBox="0 0 20 20"><path fill="#a9c4ec" stroke="#445" d="M1 19v-4l2-2h6l2 3v3zM9 8V4l2-2h6l2 3v3z"/><path stroke="#111" stroke-width="1.500" d="M14 16v-6M12 12l2-2 2 2"/></svg></i>
            <i class="d"><svg viewBox="0 0 20 20"><use href="#hat"/><path fill="#f0d838" stroke="#705818" d="M6 14 16 3l3 3-9 10-5 2z"/></svg></i>
            <i class="d"><svg viewBox="0 0 20 20"><use href="#hat"/><path stroke="#d01818" stroke-width="2.500" d="M2 8l12 10M14 8 2 18"/></svg></i>
          </div></div>
          <div class="sec"><div class="ltr">T</div><div class="tools">
            <i class="d"><svg viewBox="0 0 20 20"><path fill="#fff" stroke="#111" d="M2 2h6v16H2zM2 6h6M2 10h6M2 14h6"/><path fill="#dcecff" class="u" d="M9 11l4-4 5 5-3 5H9z"/></svg></i>
            <i class="d"><svg viewBox="0 0 20 20"><path stroke="#111" d="M2 6V3h5M5 1l2 2-2 2"/><path fill="#fff" stroke="#444" d="M3 11l4-4 4 4-2 6H3z"/><path fill="#dcecff" class="u" d="M11 7l4-5 4 5-4 4z"/></svg></i>
            <i class="d"><svg viewBox="0 0 20 20"><path fill="#fff" stroke="#444" d="M3 11l4-4 5 4-2 6H3z"/><text class="t mg" x="12" y="11" font-size="13">?</text></svg></i>
            <i class="d"><svg viewBox="0 0 20 20"><path stroke="#111" d="M2 6V3h5M5 1l2 2-2 2"/><path fill="#fff" stroke="#444" d="M3 11l4-4 4 4-2 6H3z"/><path fill="#dcecff" class="u" d="M11 7l4-5 4 5-4 4z"/><path stroke="#b08a30" stroke-width="2.500" d="M9 13l4 4 5-6"/></svg></i>
            <i class="d"><svg viewBox="0 0 20 20"><path fill="#fff" stroke="#111" d="M2 2h6v16H2zM2 6h6M2 10h6M2 14h6"/><path stroke="#d01818" stroke-width="2.500" d="M7 5l12 12M19 5 7 17"/></svg></i>
          </div></div>
          <div class="sec"><div class="ltr">A</div><div class="tools">
            <i class="d"><svg viewBox="0 0 20 20"><text class="t rs" x="1" y="17" font-size="20">A</text></svg></i>
            <i class="d"><svg viewBox="0 0 20 20"><path stroke="#a01818" stroke-width="1.500" d="M9 9 2 16M2 11v5h5"/><text class="t rs" x="9" y="11" font-size="11">A</text></svg></i>
            <i class="d"><svg viewBox="0 0 20 20"><text class="t rs" x="1" y="18" font-size="10">A</text><text class="t bs" x="10" y="9" font-size="10">B</text><path stroke="#111" d="M13 17v-5M11 14l2-2 2 2"/></svg></i>
            <i class="d"><svg viewBox="0 0 20 20"><text class="t rs" x="0" y="8" font-size="9">ABC</text><path stroke="#777" stroke-width="2" d="M5 11l4 5 6-5"/></svg></i>
            <i class="d"><svg viewBox="0 0 20 20"><text class="t rs" x="0" y="18" font-size="20">C</text><text class="t rs" x="13" y="8" font-size="9">C</text></svg></i>
            <i class="d"><svg viewBox="0 0 20 20"><text class="t mg" x="7" y="8" font-size="10">?</text><text class="t rs" x="0" y="18" font-size="9">ABC</text></svg></i>
            <i class="d"><svg viewBox="0 0 20 20"><text class="t rs" x="1" y="18" font-size="10">A</text><text class="t rs" x="10" y="9" font-size="10">A</text><path stroke="#111" d="M13 17v-5M11 14l2-2 2 2"/></svg></i>
            <i class="d"><svg viewBox="0 0 20 20"><text class="t rs" x="1" y="19" font-size="9">A</text><text class="t bs" x="8" y="10" font-size="12">A</text><path stroke="#111" d="M12 18v-6M10 14l2-2 2 2"/></svg></i>
            <i class="d"><svg viewBox="0 0 20 20"><text class="t rs" x="7" y="9" font-size="10">1</text><path stroke="#a01818" d="M10 10v9M5 15h10"/><circle class="n" cx="10" cy="15" r="1.500"/></svg></i>
            <i class="d"><svg viewBox="0 0 20 20"><text class="t rs" x="0" y="8" font-size="8">A1A</text><text class="t rs" x="5" y="18" font-size="8">A2A</text></svg></i>
            <i class="d"><svg viewBox="0 0 20 20"><text class="t rs" x="0" y="8" font-size="9">A1</text><path stroke="#a01818" d="M1 9h9"/><text class="t bs" x="8" y="18" font-size="9">A1</text></svg></i>
            <i class="d"><svg viewBox="0 0 20 20"><text class="t rs" x="0" y="8" font-size="9">A1</text><path stroke="#a01818" d="M1 9h9"/><text class="t bs" x="8" y="18" font-size="9">A2</text></svg></i>
            <i class="d"><svg viewBox="0 0 20 20"><text class="t rs" x="1" y="13" font-size="7.500">ABC</text><path stroke="#222" stroke-dasharray="1 1" d="M1 3h18v15H1z"/></svg></i>
            <i class="d"><svg viewBox="0 0 20 20"><path stroke="#222" stroke-dasharray="2 1" d="M1 3h18M1 7h18M1 11h18"/><path stroke="#222" stroke-dasharray="3 2" d="M1 16h18"/></svg></i>
          </div></div>
          <div class="sec sec-last"><div class="ltr"></div><div class="tools">
            <i class="d"><svg viewBox="0 0 20 20"><path class="u" d="M1 12h18M10 2v18M4 5l12 12M16 5 4 17"/><circle class="n" cx="10" cy="12" r="2"/></svg></i>
            <i class="d"><svg viewBox="0 0 20 20"><path stroke="#999" d="M2 5h6M5 2v6M3 3l5 5M8 3 3 8M12 5h6M15 2v6M13 3l5 5M18 3l-5 5M5 10v9M15 10v9"/></svg></i>
            <i class="d"><svg viewBox="0 0 20 20"><path class="u" d="M10 6h8M14 2v8M11 3l6 6M17 3l-6 6M2 16h5"/><path stroke="#111" d="M14 18v-5M12 15l2-2 2 2"/></svg></i>
            <i class="d"><svg viewBox="0 0 20 20"><path class="u" d="M2 14h12M8 8v11M4 10l8 8M12 10l-8 8"/><circle cx="15" cy="4" r="3" stroke="#111"/></svg></i>
            <i class="d"><svg viewBox="0 0 20 20"><path class="u" d="M2 15h10M7 10v9M3 11l8 8M11 11l-8 8"/><text class="t mg" x="11" y="12" font-size="13">?</text></svg></i>
            <i class="d"><svg viewBox="0 0 20 20"><path stroke="#111" d="M3 18 16 5M11 3h6v6"/><circle class="n" cx="5" cy="15" r="2"/></svg></i>
            <i class="d"><svg viewBox="0 0 20 20"><path class="u" d="M2 5h16M5 2v6M10 2v6M15 2v6M3 2l4 6M8 2l4 6M13 2l4 6M3 15h8M7 11v8"/></svg></i>
          </div></div>
        </div>
        <div class="vscroll"><i class="up"></i><i class="thumb thumb-l"></i><i class="dn"></i></div>
      </div>
    </div>
    <div class="dock fit-dock">
      <div class="dock-head"><span>Fit View</span><div class="ctl"><i class="tri"></i><svg viewBox="0 0 10 12"><path d="M3 1h4v6H3zM1 7h8M5 7v4M1 3h2M7 3h2"/></svg><svg viewBox="0 0 10 12"><path d="M3 1h4v6H3zM1 7h8M5 7v4"/></svg><svg class="x" viewBox="0 0 12 12"><path d="M1 1l10 10M11 1 1 11"/></svg></div></div>
      <div class="fit-row"><span><u>F</u>iles:</span><div class="combo w102">All</div></div>
    </div>
  </aside>

  <section class="view">
    <div class="view-head">
      <i class="vh-ic"></i><span>View 1, Model</span>
      <div class="vh-btns">
        <span class="vb"><svg viewBox="0 0 12 10"><path fill="#fff" stroke="#345" d="M1 6h10v2H1z"/></svg></span>
        <span class="vb"><svg viewBox="0 0 12 10"><path fill="#fff" stroke="#345" d="M5 1h6v5H5zM1 4h6v5H1z"/></svg></span>
        <span class="vb vb-x"><svg viewBox="0 0 12 10"><path stroke="#fff" stroke-width="2.500" d="M2 1l8 8M10 1 2 9"/></svg></span>
      </div>
    </div>
    <svg class="canvas" viewBox="276 142 1370 836" preserveAspectRatio="xMinYMin slice">
      <defs><clipPath id="roadclip"><path d="M250 562H405V650H1000V200H1617V1000H250z"/></clipPath></defs>
      <g clip-path="url(#roadclip)" fill="none">
        <path stroke="#3a3c2d" stroke-width="31" stroke-dasharray="2 3" d="M412 553 326 644Q316 660 326 676L535 884Q556 902 578 901L710 872 925 803Q965 790 995 764L1041 726 1069 702 1176 586 1293 482 1625 192"/>
        <path stroke="#4a4d39" stroke-width="26" d="M412 553 326 644Q316 660 326 676L535 884Q556 902 578 901L710 872 925 803Q965 790 995 764L1041 726 1069 702 1176 586 1293 482 1625 192"/>
        <path stroke="#5c5c5f" stroke-width="17" d="M412 553 326 644Q316 658 324 672"/>
        <path stroke="#55565a" stroke-width="6" d="M324 672 534 877Q556 895 578 893L710 863 925 795Q965 782 992 757L1039 719 1066 695 1172 580 1289 476 1618 186"/>
      </g>
      <g fill="none">
        <path stroke="#0a12e8" stroke-width="3" d="M312 670Q322 674 333 690L530 880Q552 901 577 901Q600 900 623 894L710 870 919 805Q960 790 992 766L1041 729 1069 706 1176 590 1293 485 1413 380 1599 215"/>
        <path stroke="#e01414" stroke-width="3" d="M308 675Q320 678 330 693L530 887Q552 906 580 906Q604 905 626 899L710 878 921 811Q964 796 996 771L1045 734 1073 711 1180 595 1297 490 1417 385 1603 220"/>
        <path stroke="#ffec30" stroke-width=".8" d="M309 677Q320 681 331 695L531 889Q553 908 580 908Q604 907 626 901L710 880 922 813Q965 798 997 773L1046 736 1074 713 1181 597 1298 492 1418 387 1604 222"/>
        <path stroke="#18d8c8" stroke-width="3" stroke-dasharray="3 2" d="M363 722 380 738M458 805 468 814M1065 709 1075 699M1303 475 1315 466"/>
        <path stroke="#20c8e0" stroke-width="2" stroke-dasharray="6 5" d="M597 903 710 875M1440 360 1445 354M1470 330 1476 324M1497 305 1520 283"/>
        <path stroke="#12e0b8" stroke-width="7" stroke-dasharray="4 2" d="M485 838 500 851"/>
        <path stroke="#14e0c0" stroke-width="3.500" stroke-dasharray="4 3" d="M1237 532 1273 505"/>
        <path stroke="#f0a818" stroke-width="3.500" stroke-dasharray="5 2" d="M950 800 985 779M775 851 795 845M1400 393 1404 390M1418 376 1430 370M1515 284 1540 262M1552 257 1555 255"/>
        <path stroke="#138050" stroke-width="4" d="M327 684 332 689"/>
      </g>
      <circle cx="1291" cy="488" r="6" fill="#f01020"/>
      <circle cx="1413" cy="383" r="5" fill="#f01020"/>
      <circle cx="626" cy="894" r="3" fill="#ffe820"/>
      <circle cx="1607" cy="211" r="3.500" fill="#0c0c0c"/>
    </svg>
  </section>

  <aside class="right">
    <div class="dock-head rhead"><span>Level Display - View 1</span><div class="ctl"><i class="tri"></i><svg viewBox="0 0 10 12"><path d="M3 1h4v6H3zM1 7h8M5 7v4M1 3h2M7 3h2"/></svg><svg class="x" viewBox="0 0 12 12"><path d="M1 1l10 10M11 1 1 11"/></svg></div></div>
    <div class="r-row r-row1">
      <i class="b"><svg viewBox="0 0 20 20"><path fill="#fff" stroke="#555" d="M9 11h9v7H9z"/><path fill="#fff" stroke="#555" d="M5 7h9v7H5z"/><path fill="#fff" stroke="#222" d="M2 3h9v7H2z"/></svg></i>
      <i class="b"><svg viewBox="0 0 20 20"><path fill="#dbe4ee" stroke="#555" d="M2 1h14v12H2z"/><path class="u" stroke-dasharray="1 1" d="M4 3l5 5M9 3 4 8"/><path fill="#111" stroke="none" d="M9 7v12l3-3 3 5 2-1-3-5h4z"/></svg></i>
      <div class="combo w102 vd">View Display</div>
    </div>
    <div class="r-row r-row2">
      <i class="b"><svg viewBox="0 0 20 20"><use href="#lay" x="4" y="0" width="16" height="16"/><path fill="#111" stroke="none" d="M1 4v14l4-3 2 4 2-1-2-4h5z"/></svg></i>
      <i class="hi"><svg viewBox="0 0 20 24"><path stroke="#443" d="M5 2v19M5 6h11M5 11h11M5 16h11M5 21h11"/><circle cx="5" cy="6" r="1.500" fill="#222" stroke="none"/><circle cx="10" cy="11" r="1.500" fill="#222" stroke="none"/><circle cx="10" cy="16" r="1.500" fill="#222" stroke="none"/><circle cx="10" cy="21" r="1.500" fill="#222" stroke="none"/></svg></i>
      <i class="b"><svg viewBox="0 0 20 20"><path fill="#fff" stroke="#2a78d8" stroke-width="1.500" d="M4 2l6 5h8l-8 7-6 5z"/></svg></i>
      <span class="none">(none)</span><i class="a"></i>
      <div class="combo w54">Levels</div>
      <i class="b"><svg viewBox="0 0 20 20"><path fill="#e8d8c0" stroke="#777" d="M1 3h18v15H1z"/><path stroke="#333" stroke-width="1.500" d="M3 14l5-4 5 3 3-3"/><path fill="#2a78d8" stroke="none" d="M14 5h5v9h-5z"/></svg></i>
      <i class="a"></i>
    </div>
    <div class="tree">
      <div class="tree-row"><i class="pm"></i><i class="v8 v8a">V8</i><span class="tree-sel">seed cracks PIIRL-Final.dgn</span></div>
      <div class="tree-row sub"><i class="lnk"></i><i class="v8">V8</i><span>Image txt of GT22-1-1772-1.dgn</span></div>
      <div class="tree-row sub"><i class="lnk"></i><i class="v8">V8</i><span>Parts 177.dgn</span></div>
      <div class="tree-row sub"><i class="lnk"></i><i class="v8">V8</i><span>Segment of GT22-1-1772_MRC_Bellec...</span></div>
      <div class="hscroll"><i class="lf"></i><i class="hthumb">III</i><i class="rt"></i></div>
    </div>
    <div class="levels">
      <div class="lv-main">
        <div class="lv-head"><span>Name</span><span class="used">Used</span><i class="sort"></i></div>
        <ul class="lv-list">
          <li class="teal bd"><span>Default</span><i></i></li>
          <li class="bd"><span>All road width</span><i></i></li>
          <li class="bd"><span>Crack_Alligator_High</span><i></i></li>
          <li class="bd"><span>Crack_Alligator_Low</span><i></i></li>
          <li class="bd"><span>Crack_Alligator_Medium</span><i></i></li>
          <li class="bd"><span>Crack_Edge_Medium</span><i></i></li>
          <li class="bd"><span>Crack_Longitudinale-off w...</span><i></i></li>
          <li class="bd"><span>Crack_Longitudinale-off w...</span><i></i></li>
          <li class="bd"><span>Crack_Patch_High</span><i></i></li>
          <li class="bd"><span>Crack_Patch_Medium</span><i></i></li>
          <li class="bd"><span>Crack_Sealed_High</span><i></i></li>
          <li class="bd"><span>Crack_Transversale_High</span><i></i></li>
          <li class="bd"><span>Crack_Transversale_Low</span><i></i></li>
          <li class="bd"><span>Crack_Transversale_Medium</span><i></i></li>
          <li class="bd"><span>Offset 30 cm</span><i></i></li>
          <li class="bd"><span>Road Width</span><i></i></li>
          <li class="bd"><span>Road_edge</span><i></i></li>
          <li class="bd white"><span>run_62</span><i></i></li>
          <li class="bd"><span>Yellow Marking</span><i></i></li>
          <li><span>bands</span></li>
          <li><span>Change segment level</span></li>
          <li><span>Crack_Accessories_High</span></li>
          <li><span>Crack_Accessories_Low</span></li>
          <li><span>Crack_Accessories_Medium</span></li>
          <li><span>Crack_Asphalt Pothole_High</span></li>
          <li><span>Crack_Asphalt Pothole_Low</span></li>
          <li><span>Crack_Asphalt Pothole_Medium</span></li>
          <li><span>Crack_Edge_High</span></li>
          <li><span>Crack_Edge_Low</span></li>
          <li><span>Crack_Gravel-Pothole_High</span></li>
          <li><span>Crack_Gravel-Pothole_Low</span></li>
          <li><span>Crack_Gravel-Pothole_Medium</span></li>
          <li><span>Crack_Longitudinal-zigzag_High</span></li>
          <li><span>Crack_Longitudinal-zigzag_Low</span></li>
          <li><span>Crack_Longitudinal-zigzag_Medium</span></li>
        </ul>
      </div>
      <div class="vscroll vscroll-r"><i class="up"></i><i class="thumb thumb-r"></i><i class="grow"></i><i class="dn"></i></div>
    </div>
  </aside>
</main>

<div class="bt">
  <div class="g q1">
    <i class="grip"></i>
    <i class="b"><svg viewBox="0 0 20 20"><path fill="#a8d0f4" stroke="#1d5eb0" stroke-width="1.500" d="M3 7l8-6 7 5v6l-8 7-7-5z"/><path stroke="#1d5eb0" d="M7 8l5 4M5 11l5 4M9 6l5 4"/></svg></i>
    <i class="b b-tiny"><svg viewBox="0 0 20 20"><circle cx="10" cy="10" r="5" fill="#a8d0f0" stroke="#567"/><path stroke="#444" d="M10 0v4M10 16v4M0 10h4M16 10h4M3 3l3 3M17 3l-3 3M3 17l3-3M17 17l-3-3"/></svg></i>
    <i class="a"></i><i class="sep s3"></i>
    <i class="b"><svg viewBox="0 0 20 20"><path fill="#d04038" stroke="#802018" d="M8 1h4v8H8z"/><path fill="#eac8a0" stroke="#806040" d="M5 10h10v8H5z"/></svg></i>
    <i class="b"><svg viewBox="0 0 20 20"><circle cx="9" cy="8" r="6" fill="#e4effa" stroke="#345"/><path stroke="#1d5eb0" stroke-width="1.500" d="M6 8h6M9 5v6"/><path stroke="#d09038" stroke-width="2.500" d="M13 13l5 6"/></svg></i>
    <i class="b"><svg viewBox="0 0 20 20"><circle cx="9" cy="8" r="6" fill="#e4effa" stroke="#345"/><path stroke="#1d5eb0" stroke-width="1.500" d="M6 8h6"/><path stroke="#d09038" stroke-width="2.500" d="M13 13l5 6"/></svg></i>
    <i class="b"><svg viewBox="0 0 20 20"><path stroke="#111" stroke-dasharray="1 1" d="M4 5h14v14H4z"/><circle cx="8" cy="6" r="5" fill="#e4effa" stroke="#345"/><path stroke="#d09038" stroke-width="2.500" d="M11 10l5 6"/></svg></i>
    <i class="b sel2"><svg viewBox="0 0 20 20"><path stroke="#111" d="M2 2h16v16H2z"/><path stroke="#111" d="M10 4v12M4 10h12M8 6l2-2 2 2M8 14l2 2 2-2M6 8l-2 2 2 2M14 8l2 2-2 2"/></svg></i>
    <i class="b"><svg viewBox="0 0 20 20"><circle cx="9" cy="10" r="7" fill="none" stroke="#8ab4e8" stroke-width="2.500"/><path stroke="#154a9c" stroke-width="2.500" d="M13 19V5M9 8l4-4 4 4"/></svg></i>
    <i class="b"><svg viewBox="0 0 20 20"><path fill="#fff" stroke="#1d5eb0" d="M6 11V4h2v6V2h2v8V3h2v7l1-5h2v8c0 4-2 6-5 6-4 0-6-3-8-7l1-1z"/></svg></i>
    <i class="b"><svg viewBox="0 0 20 20"><path fill="#eee" stroke="#999" d="M4 2h3v7H4zM5 11h2v6H5zM13 2h3v7h-3zM13 11h2v6h-2z"/></svg></i>
    <i class="b"><svg viewBox="0 0 20 20"><path fill="#eee" stroke="#999" d="M3 1l15 9-15 9 3-9z"/></svg></i>
    <i class="sep s3"></i>
    <i class="b"><svg viewBox="0 0 20 20"><path fill="#cfe0f0" stroke="#444" d="M1 2h18v16H1z"/><path stroke="#111" d="M5 12c3-5 8-5 10 0M5 12v-4M5 12h4"/></svg></i>
    <i class="b"><svg viewBox="0 0 20 20"><path fill="#cfe0f0" stroke="#444" d="M1 2h18v16H1z"/><path stroke="#111" d="M15 12c-3-5-8-5-10 0M15 12v-4M15 12h-4"/></svg></i>
    <i class="sep s3 s3w"></i>
    <i class="b"><svg viewBox="0 0 20 20"><path fill="#fff" stroke="#888" d="M9 1h9v8H9z"/><path fill="#fff" stroke="#333" d="M1 12h8v7H1z"/><path stroke="#111" stroke-width="1.500" d="M14 18v-6M12 14l2-2 2 2"/></svg></i>
    <i class="b"><svg viewBox="0 0 20 20"><path fill="#fff" stroke="#333" d="M2 3h16l-8 16zM6 7l4 4 4-4M10 11v8"/></svg></i>
    <i class="b"><svg viewBox="0 0 20 20"><path fill="#a8d0f4" stroke="#1d5eb0" d="M6 4l4-3 4 3v4l-4 3-4-3z"/><path stroke="#111" stroke-width="1.500" d="M5 10l10 7M15 10 5 17"/><circle cx="5" cy="18" r="1.500" stroke="#2a6cc8"/><circle cx="15" cy="18" r="1.500" stroke="#2a6cc8"/></svg></i>
    <i class="b"><svg viewBox="0 0 20 20"><path fill="#fff" stroke="#1d5eb0" d="M2 2h13v13H2z"/><path fill="#555" stroke="#333" d="M9 10l5-3 5 3v6l-5 3-5-3z"/></svg></i>
  </div>
  <div class="g q2">
    <i class="grip"></i>
    <i class="c"><svg viewBox="0 0 20 20"><circle cx="10" cy="10" r="9" fill="#b8b8b8" stroke="#999"/><path stroke="#fff" stroke-width="2" d="M14 10H6M9 6l-4 4 4 4"/></svg></i><i class="a ag"></i>
    <i class="c"><svg viewBox="0 0 20 20"><circle cx="10" cy="10" r="9" fill="#b8b8b8" stroke="#999"/><path stroke="#fff" stroke-width="2" d="M6 10h8M11 6l4 4-4 4"/></svg></i><i class="a ag"></i>
    <i class="c"><svg viewBox="0 0 20 20"><path stroke="#aaa" d="M9 1l1 10M2 13l8-2 7 3"/><path fill="#ddd" stroke="#bbb" d="M4 14c3 5 9 5 12 0-4-2-8-2-12 0z"/></svg></i><i class="a ag"></i>
    <div class="combo w127"><svg viewBox="0 0 14 14"><path fill="#fff" stroke="#555" d="M5 1h8v6H5zM1 5h8v7H1z"/></svg>Model</div>
    <i class="b m1"><svg viewBox="0 0 20 20"><path fill="#fff" stroke="#444" d="M8 4h10v9H8zM2 8h10v9H2z"/></svg></i>
    <i class="sep vs"></i>
    <div class="vnums"><span class="on">1</span><span>2</span><span>3</span><span>4</span><span>5</span><span>6</span><span>7</span><span>8</span></div>
  </div>
  <div class="g q3">
    <i class="grip"></i>
    <i class="b"><svg viewBox="0 0 20 20"><path stroke="#aaa" stroke-width="4" d="M12 1l7 6M19 1l-7 6"/><path stroke="#e8d020" stroke-width="3.500" d="M4 6l11 11M15 6 4 17"/></svg></i>
    <i class="sep s3"></i>
    <i class="b"><svg viewBox="0 0 20 20"><use href="#dot"/><path stroke="#333" d="M12 6c3-1 4-3 5-5M2 17l2-2"/></svg></i>
    <i class="b sel3"><svg viewBox="0 0 20 20"><use href="#dot" x="-1" y="2"/><circle class="n" cx="15" cy="4" r="2"/><circle class="n" cx="15" cy="14" r="2"/></svg></i>
    <i class="b"><svg viewBox="0 0 20 20"><path stroke="#333" d="M2 19 18 2"/><circle class="n" cx="10" cy="10.500" r="2.500"/></svg></i>
    <i class="b"><svg viewBox="0 0 20 20"><circle stroke="#444" cx="10" cy="10" r="8"/><circle class="n" cx="10" cy="10" r="2.500"/></svg></i>
    <i class="b"><svg viewBox="0 0 20 20"><path stroke="#444" d="M10 1v18M1 10h18M4 4l12 12M16 4 4 16"/><circle class="n" cx="10" cy="10" r="3"/></svg></i>
    <i class="b"><svg viewBox="0 0 20 20"><path stroke="#333" d="M4 18c0-8 5-3 6-9 1-4 4-3 5-7"/><circle class="n" cx="10" cy="10" r="2"/></svg></i>
    <i class="b"><svg viewBox="0 0 20 20"><path stroke="#333" d="M3 2l14 16M17 2 3 18"/><circle class="n" cx="10" cy="10" r="2"/></svg></i>
    <i class="b"><svg viewBox="0 0 20 20"><path stroke="#333" d="M3 18C3 8 6 5 10 5s7 3 7 13M1 5h18"/></svg></i>
    <i class="b"><svg viewBox="0 0 20 20"><path stroke="#333" d="M2 18C3 9 6 6 10 6s7 3 8 12"/><circle class="n" cx="10" cy="5" r="2"/></svg></i>
    <i class="b"><svg viewBox="0 0 20 20"><path stroke="#333" d="M12 3v14M2 17h16M8 17v-4h4"/></svg></i>
    <i class="b"><svg viewBox="0 0 20 20"><path stroke="#333" d="M11 2v14M1 15h17M7 15v-4h4"/><circle class="n" cx="14" cy="15" r="2"/></svg></i>
    <i class="b"><svg viewBox="0 0 20 20"><path stroke="#aaa" d="M3 4h6v5H3zM10 6h8M3 14h15"/></svg></i>
    <i class="b"><svg viewBox="0 0 20 20"><path stroke="#aaa" d="M10 5v10M5 10h10"/><circle cx="10" cy="10" r="2" stroke="#aaa" fill="#eee"/></svg></i>
    <i class="b"><svg viewBox="0 0 20 20"><path stroke="#aaa" d="M15 2c0 5-3 5-3 9M6 18c1-4 3-5 6-7l3 7M12 11l-5-4"/></svg></i>
    <i class="b"><svg viewBox="0 0 20 20"><use href="#snapb"/></svg></i>
    <i class="b"><svg viewBox="0 0 20 20"><use href="#snapb" width="16" height="20" x="1"/><path stroke="#333" d="M16 13v6M19 13v6"/></svg></i>
    <i class="b"><svg viewBox="0 0 20 20"><use href="#snapb" width="15" height="20"/><path stroke="#333" d="M14 13v6M16.500 13v6M19 13v6"/></svg></i>
  </div>
  <div class="g q4">
    <i class="grip"></i>
    <i class="b"><svg viewBox="0 0 20 20"><path stroke="#d01818" d="M4 3h12v15H4zM4 6h12M7 1v3M13 1v3"/></svg></i>
    <div class="inp iw135">0.0000</div>
  </div>
  <div class="divider"></div>
  <div class="g q5">
    <i class="b"><svg viewBox="0 0 20 20"><path stroke="#d01818" d="M4 2v14h13M4 6c5 1 8 4 9 8"/><path stroke="#111" d="M3 17h14"/></svg></i>
    <div class="inp iw137">0°</div>
  </div>
</div>

<footer class="status">
  <div class="msg">Fit View &gt; Select view to fit</div>
  <i class="st-grip"></i>
  <div class="cell c27"></div>
  <div class="st-fill"></div>
  <div class="cell c26"><svg viewBox="0 0 16 16"><path class="u" d="M3 14h3V10M12 2v5"/><circle class="n" cx="4" cy="13" r="1.500"/><circle class="n" cx="12" cy="8" r="1.500"/></svg></div>
  <div class="cell c30"><svg viewBox="0 0 16 16"><path fill="#c0c040" stroke="#555" d="M3 7h10v7H3z"/><path fill="none" stroke="#666" d="M5 7V4c0-3 6-3 6 0v3"/></svg></div>
  <div class="cell c116 txt">Default</div>
  <div class="cell c105"></div>
  <div class="cell c28"></div><div class="cell c28"></div><div class="cell c28"></div>
  <div class="cell c28"><svg viewBox="0 0 16 16"><path fill="none" stroke="#999" d="M3 3h9l2 2-3 4 3 4H4l-2-3 3-3z"/></svg></div>
  <div class="cell c28"><svg viewBox="0 0 20 20"><use href="#lay"/></svg></div>
  <div class="cell c28"></div>
  <div class="cell c28"><svg viewBox="0 0 16 16"><path fill="#ddd" stroke="#888" d="M2 2h12v10l-3 3H5l-3-3zM5 4h6v6H5z"/></svg></div>
</footer>
</div>
</body>
</html>
```

FILE: styles.css
```css
* { box-sizing: border-box; }
html, body { margin: 0; height: 100%; overflow: hidden; }
body { font: 12px "Liberation Sans", Arial, sans-serif; color: #222; background: #b3bcdc; }
i, em { font-style: normal; }
.defs { position: absolute; width: 0; height: 0; }
.app { width: 1921px; height: 1039px; display: flex; flex-direction: column; }

/* shared svg primitive colours */
svg { display: block; fill: none; stroke: #555; overflow: visible; }
.u { stroke: #2a6cc8; }
.ub { stroke: #2a6cc8; fill: #eef5fd; stroke-width: 1.500; }
.n { stroke: #2a6cc8; fill: #d8e8fa; }
.fl { fill: #f0f0f0; }
.t { stroke: none; font-family: "Liberation Serif", serif; font-weight: bold; }
.dg { font-family: "Liberation Sans", sans-serif; font-weight: normal; fill: #777; }
.rs { fill: #a01818; }
.bs { fill: #1858c8; }
.mg { fill: #b020a0; }
.rd { fill: #d81818; font-family: "Liberation Sans", sans-serif; font-weight: normal; }
.wh { fill: #fff; }
.ti { font-style: italic; }

/* title */
.title { height: 21px; display: flex; align-items: center; border-bottom: 1px solid #3e4f60; flex: none;
  background: linear-gradient(90deg, #7f9fb8 0, #4d6f8a 200px, #7e98ae 430px, #46647f 470px, #38566f 840px, #7fb4d0 900px, #a9e4ee 960px, #b4f2f6 1200px, #93cfe2 1340px, #4b7896 1500px, #2f5470 1560px, #8fa2b0 1700px, #73889c 1813px, #8a9cb0 1921px); }
.logo { width: 16px; height: 16px; margin-left: 3px; }
.title-text { margin-left: 3px; font-size: 11.500px; color: #101010; text-shadow: 0 0 5px #e8f2fa, 0 0 3px #e8f2fa; white-space: nowrap; }
.win-btns { margin-left: auto; margin-right: 4px; height: 20px; width: 104px; display: flex; background: linear-gradient(#b4c2d2, #7c90a4); border: 1px solid #4a5a6a; border-top: 0; border-radius: 0 0 4px 4px; }
.wb { width: 26px; display: flex; align-items: center; justify-content: center; border-right: 1px solid #5d6f80; }
.wb svg { width: 12px; height: 10px; }
.wb-x { flex: 1; border: 0; font-size: 13px; font-weight: bold; color: #fff; text-shadow: 0 0 2px #222; }

/* menu */
.menu { height: 23px; flex: none; display: flex; align-items: center; background: #f0f0f0; font-size: 12px; letter-spacing: -.55px; color: #222; }
.menu span { margin-left: 12px; }
.menu span:first-of-type { margin-left: 10px; }
.menu u { text-decoration: underline; }
.menu .grip { height: 10px; }

/* toolbars */
.tb { height: 34px; flex: none; display: flex; align-items: stretch; background: #f0f0f0; }
.bt { height: 34px; flex: none; display: flex; align-items: stretch; background: #f0f0f0; }
.g { display: flex; align-items: center; background: linear-gradient(#f8f8f8 0, #f4f4f4 40%, #dedede 100%); border-radius: 2px; flex: none; }
.grip { width: 2px; height: 20px; margin: 0 2px; flex: none; background: radial-gradient(circle, #777 0, #777 45%, transparent 60%) 0 0 / 2px 4px; }
.b { width: 28px; height: 28px; flex: none; display: flex; align-items: center; justify-content: center; }
.b svg { width: 22px; height: 22px; }
.bl svg { width: 24px; height: 24px; }
.a { width: 12px; flex: none; height: 10px; position: relative; }
.a::before { content: ""; position: absolute; left: 2px; top: 3px; border: 4px solid transparent; border-top: 4px solid #222; border-bottom: 0; }
.ag::before { border-top-color: #888; }
.m4 { margin-left: 7px; margin-right: 2px; }
.sep { width: 1px; height: 28px; background: #b8b8b8; margin: 0 3px 0 4px; flex: none; }
.s3 { margin: 0 2px 0 3px; }
.sw { width: 18px; height: 18px; background: #33ff00; border: 1px solid #333; margin-left: 12px; flex: none; }
.num { width: 18px; text-align: center; margin-right: 5px; font-size: 12px; flex: none; }
.n28 { width: 28px; margin-right: 0; }
.combo { height: 17px; border: 1px solid #7a7a7a; border-radius: 2px; background: linear-gradient(#fafafa, #dcdcdc); display: flex; align-items: center; padding-left: 3px; font-size: 11.500px; letter-spacing: -.2px; position: relative; flex: none; gap: 6px; }
.combo::after { content: ""; position: absolute; right: 5px; top: 6px; border: 4px solid transparent; border-top: 4px solid #222; border-bottom: 0; }
.combo svg { width: 14px; height: 14px; }
.w128 { width: 128px; margin-left: 7px; }
.w102 { width: 102px; }
.w54 { width: 54px; }
.w127 { width: 127px; }
.vd { width: 101px; margin-left: 9px; }
.g1 { padding-right: 3px; }
.g2 { margin-left: 5px; padding-right: 2px; }
.g3 { margin-left: 5px; padding-right: 2px; }
.g4 { margin-left: 5px; padding-right: 3px; }
.g5 { margin-left: 4px; padding-right: 4px; }
.g5 .a { margin-left: 2px; }
.g6 { margin-left: 5px; padding-right: 2px; }
.g7 { margin-left: 2px; }
.g7 .grip { margin-right: 5px; }
.g8 { margin-left: 2px; padding-right: 2px; }
.g8 .grip { margin-right: 0; }

.h1 { padding-right: 3px; }
.h1 .grip { margin-right: 3px; }
.h1 .a { margin-left: 3px; }
.nw { width: 27px; }
.nw1 { margin-left: 4px; }
.bx svg { outline: 1px solid #a8a090; }
.h2 { margin-left: 4px; padding-right: 3px; }
.h2 .grip { margin-right: 0; }
.tx { font-size: 27px; flex: none; line-height: 28px; font-weight: normal; height: 28px; display: flex; justify-content: center; white-space: nowrap; }
.r1 { color: #e02838; width: 20px; transform: scaleX(.42); }
.r2 { color: #d82838; width: 30px; margin-left: 8px; transform: scaleX(.57); }
.r3 { color: #2840d0; width: 28px; transform: scaleX(.67); }
.r4 { color: #20e040; width: 23px; font-weight: bold; transform: scaleX(.62); }
.r4 em { color: #e83838; }
.r5 { color: #20e040; width: 26px; margin-left: 1px; font-weight: bold; transform: scaleX(.6); }
.r5 em { color: #e83838; text-decoration: line-through; text-decoration-color: #111; }
.r6 { color: #f020d8; width: 26px; font-weight: bold; transform: scaleX(.72); }
.r7 { color: #f060e0; width: 27px; transform: scaleX(.55); }
.r7 em { color: #f020d8; font-weight: bold; }
.h2 .bl { width: 27px; }
.bl1 { margin-left: 2px; }
.h3 { margin-left: 5px; padding-right: 3px; }
.h4 { margin-left: 3px; padding-right: 4px; }
.gg { width: 22px; height: 24px; background: #fff; color: #1a78e0; font: bold 22px/24px "Liberation Serif", serif; text-align: center; margin-left: 5px; }
.h5 { margin-left: 3px; padding-right: 2px; }
.h5 .grip { margin-right: 5px; }
.h6 { margin-left: 3px; padding-right: 1px; }
.h6 .grip { margin-right: 3px; }
.h6 .a { margin-left: 2px; }
.h6 .s3 { margin-right: 4px; }
.h7 { margin-left: 3px; padding-right: 2px; }
.h7 .grip { margin-right: 4px; }

/* main area */
.main { flex: 1; min-height: 0; display: flex; background: #b3bcdc; }
.left { width: 270px; flex: none; display: flex; flex-direction: column; gap: 10px; }
.dock-head { height: 21px; flex: none; display: flex; align-items: center; justify-content: space-between; padding: 0 4px 0 2px; background: linear-gradient(#bdd3ea, #e4eef8); font-size: 12px; color: #555; }
.ctl { display: flex; align-items: center; gap: 4px; }
.ctl svg { width: 10px; height: 12px; stroke: #333; }
.ctl svg.x { width: 13px; height: 13px; stroke-width: 2; stroke: #444; }
.tri { width: 0; height: 0; border: 4px solid transparent; border-top: 5px solid #444; border-bottom: 0; margin-right: 2px; }
.tasks-dock { height: 431px; flex: none; background: #f0f0f0; display: flex; flex-direction: column; }
.fit-dock { flex: 1; background: #f0f0f0; }
.taskcombo { margin: 5px 3px 0 5px; height: 24px; flex: none; background: #fff; border: 1px solid #aaa; border-bottom-color: #777; border-radius: 3px 3px 0 0; display: flex; align-items: center; padding-left: 6px; gap: 5px; font-size: 12px; letter-spacing: .5px; }
.taskcombo svg { width: 14px; height: 14px; }
.tc-arrow { margin-left: auto; width: 24px; height: 100%; border-left: 1px solid #ccc; position: relative; }
.tc-arrow::before { content: ""; position: absolute; left: 8px; top: 9px; border: 4px solid transparent; border-top: 5px solid #333; border-bottom: 0; }
.toolrow { margin: 5px 3px 0 4px; height: 34px; flex: none; display: flex; align-items: center; padding-left: 6px; background: #fff; }
.k { width: 28px; height: 28px; flex: none; position: relative; }
.k svg { width: 28px; height: 28px; }
.k::after { content: ""; position: absolute; left: 1px; bottom: 1px; width: 9px; height: 11px; border-right: 1px solid #999; border-bottom: 1px solid #999; }
.k.sel svg { outline: 1px solid #8a8a7a; }
.draw { flex: 1; min-height: 0; margin: 6px 2px 0 5px; display: flex; gap: 3px; }
.draw-main { width: 244px; flex: none; overflow: hidden; background: #fff; display: flex; flex-direction: column; }
.draw-head { height: 22px; flex: none; display: flex; align-items: center; background: linear-gradient(#cfe5f8, #eef6fc); padding-left: 3px; }
.dh-ic { width: 18px; height: 18px; }
.draw-head strong { font: bold 11px "DejaVu Sans", sans-serif; margin-left: 4px; color: #222; }
.view-ic { margin-left: auto; display: flex; align-items: center; gap: 4px; margin-right: 6px; }
.view-ic svg { width: 14px; height: 14px; stroke: none; }
.view-ic svg.on { width: 16px; height: 16px; background: #fff; outline: 1px solid #bbb; }
.sec { display: flex; border-bottom: 1px solid #aaa; margin: 0 5px 0 3px; padding-top: 1px; flex: none; }
.draw-head + .sec { padding-top: 3px; }
.sec-last { border: 0; }
.ltr { width: 16px; flex: none; background: linear-gradient(90deg, #d6d6d6, #fafafa); color: #777; font-size: 14px; display: flex; align-items: center; justify-content: center; }
.tools { display: flex; flex-wrap: wrap; flex: 1; }
.d { width: 28px; height: 28px; display: flex; align-items: center; justify-content: center; }
.d svg { width: 22px; height: 22px; }
.vscroll { width: 16px; flex: none; display: flex; flex-direction: column; align-items: center; background: #f4f4f4; }
.up, .dn { width: 16px; height: 16px; flex: none; position: relative; }
.up::before { content: ""; position: absolute; left: 5px; top: 6px; border: 3px solid transparent; border-bottom: 3px solid #555; border-top: 0; }
.dn::before { content: ""; position: absolute; left: 5px; top: 7px; border: 3px solid transparent; border-top: 3px solid #555; border-bottom: 0; }
.thumb { width: 15px; flex: none; background: linear-gradient(90deg, #f0f0f0, #cfcfcf); border: 1px solid #aaa; border-radius: 2px; }
.thumb-l { height: 202px; margin-bottom: 90px; }
.thumb-r { height: 320px; }
.grow { flex: 1; }
.fit-row { display: flex; align-items: center; margin-top: 5px; padding-left: 32px; gap: 6px; font-size: 11px; color: #333; }
.fit-row .combo { height: 15px; font-size: 11px; }

.view { width: 1371px; flex: none; margin-left: 5px; display: flex; flex-direction: column; }
.view-head { height: 30px; flex: none; display: flex; align-items: center; padding: 6px 0 0 7px; background: linear-gradient(#9bb5d3, #c3d6ea); font-size: 12px; color: #222; }
.vh-ic { width: 14px; height: 14px; background: #444; border: 3px solid #e4eaf2; margin-right: 7px; outline: 1px solid #9bb; }
.vh-btns { margin-left: auto; display: flex; gap: 3px; margin-right: 3px; margin-top: 5px; }
.vb { width: 30px; height: 16px; display: flex; align-items: center; justify-content: center; border: 1px solid #7a95b5; border-radius: 2px; background: linear-gradient(#dbe6f2, #a9bfd8); }
.vb svg { width: 12px; height: 10px; }
.vb-x { background: linear-gradient(#dc8a7a, #b83a28); border-color: #8a3a30; }
.canvas { flex: 1; min-height: 0; width: 100%; background: #000; overflow: hidden; }

/* right panel */
.right { width: 271px; flex: none; margin-left: 4px; background: #f0f0f0; border-right: 1px solid #444; display: flex; flex-direction: column; }
.rhead { padding-left: 3px; }
.r-row { display: flex; align-items: center; flex: none; }
.r-row1 { height: 34px; padding-left: 5px; }
.r-row1 .b + .b { margin-left: 4px; }
.r-row1 .combo { height: 15px; }
.r-row2 { height: 26px; padding-left: 5px; margin-top: 5px; }
.hi { width: 28px; height: 27px; margin-left: 7px; flex: none; display: flex; align-items: center; justify-content: center; background: linear-gradient(#fbd690, #f7b450); border: 1px solid #80a8d0; }
.hi svg { width: 20px; height: 24px; }
.none { font-size: 11.500px; margin-left: 6px; margin-right: 2px; letter-spacing: -.2px; }
.r-row2 .combo { height: 15px; margin-left: 7px; margin-right: 4px; }
.r-row2 .b + .a { margin-left: 2px; }
.tree { height: 141px; flex: none; margin: 7px 2px 0 3px; background: #fff; border: 2px solid #999; border-right-color: #ddd; border-bottom-color: #ddd; padding-top: 2px; display: flex; flex-direction: column; font-size: 11.500px; letter-spacing: -.3px; }
.tree-row { height: 18px; flex: none; display: flex; align-items: center; padding-left: 8px; white-space: nowrap; }
.tree-row.sub { color: #8a8a8a; padding-left: 25px; }
.pm { width: 9px; height: 9px; border: 1px solid #888; margin-right: 2px; position: relative; flex: none; }
.pm::before { content: ""; position: absolute; left: 1px; top: 3px; width: 5px; height: 1px; background: #333; }
.lnk { width: 8px; height: 1px; background: #999; flex: none; }
.v8 { width: 15px; height: 15px; margin-right: 4px; flex: none; background: #e0e0e0; color: #999; font-size: 10px; font-weight: bold; line-height: 14px; text-align: center; border: 1px solid #bbb; letter-spacing: -1px; }
.v8a { background: #8fb8ec; color: #1848a8; border-color: #3a70c0; }
.tree-sel { background: #e4f2fb; border: 1px solid #bcdcf0; padding: 0 1px; color: #111; }
.hscroll { margin-top: auto; height: 16px; flex: none; display: flex; align-items: center; }
.lf, .rt { width: 18px; height: 16px; position: relative; flex: none; }
.lf::before { content: ""; position: absolute; left: 6px; top: 4px; border: 4px solid transparent; border-right: 4px solid #333; border-left: 0; }
.rt::before { content: ""; position: absolute; left: 8px; top: 4px; border: 4px solid transparent; border-left: 4px solid #333; border-right: 0; }
.hthumb { flex: none; width: 197px; margin-left: 1px; height: 15px; border: 1px solid #aaa; border-radius: 2px; background: linear-gradient(#f4f4f4, #cfcfcf); text-align: center; font-size: 8px; color: #555; line-height: 13px; letter-spacing: 0; }
.levels { flex: 1; min-height: 0; margin: 9px 2px 3px 3px; display: flex; border: 2px solid #999; border-right-color: #ddd; border-bottom: 0; border-left-width: 1px; }
.lv-main { flex: 1; min-width: 0; display: flex; flex-direction: column; }
.lv-head { height: 21px; flex: none; display: flex; align-items: center; padding-left: 8px; background: #fbfbfb; font-size: 11.500px; letter-spacing: -.2px; margin-bottom: 1px; border-bottom: 1px solid #ddd; }
.used { margin-left: auto; margin-right: 12px; }
.sort { width: 0; height: 0; border: 4px solid transparent; border-top: 4px solid #9ab; border-bottom: 0; margin-right: 8px; margin-bottom: 8px; }
.lv-list { list-style: none; margin: 0; padding: 0; background: #3399ff; flex: 1; overflow: hidden; }
.lv-list li { height: 17px; display: flex; align-items: center; padding-left: 3px; color: #f4faff; font-size: 11.500px; letter-spacing: -.5px; white-space: nowrap; }
.lv-list li span { width: 202px; flex: none; }
.lv-list li.bd { font-weight: bold; font-size: 12px; letter-spacing: -.1px; padding-left: 4px; }
.lv-list li i { width: 4px; height: 4px; border-radius: 50%; background: #fff; flex: none; }
.lv-list li.teal { background: #0b8080; }
.lv-list li.white { background: #fff; color: #3399ff; }
.lv-list li.white i { background: #000; }
.vscroll-r { width: 14px; }
.vscroll-r .thumb { width: 13px; }

/* bottom toolbar */
.q1 .grip { margin-right: 3px; }
.b-tiny { margin-left: -1px; }
.q1 .a { margin-left: 3px; }
.s3w { margin-right: 5px; }
.sel2 { background: linear-gradient(#fbe6b8, #f0f0f0); outline: 1px solid #5a86b8; outline-offset: -1px; }
.q2 { margin-left: 3px; }
.q2 .grip { margin-right: 7px; }
.c { width: 20px; height: 28px; flex: none; display: flex; align-items: center; justify-content: center; }
.c svg { width: 19px; height: 19px; }
.ag { margin: 0 6px; }
.q2 .combo { margin-left: -4px; height: 19px; padding-left: 4px; }
.m1 { margin-left: 6px; }
.vs { margin: 0 4px 0 3px; }
.vnums { display: flex; height: 22px; font-size: 12px; }
.vnums span { width: 14px; display: flex; align-items: center; justify-content: center; background: #dedede; border: 1px solid #b4b4b4; }
.vnums span.on { background: linear-gradient(#fdd79a, #fff0d8); }
.q3 { margin-left: 3px; padding-right: 2px; }
.q3 .grip { margin-right: 0; }
.sel3 { background: repeating-conic-gradient(#f2a838 0 25%, #fbdca0 0 50%) 0 0 / 3px 3px; outline: 1px solid #5a86b8; outline-offset: -1px; }
.q3 .s3 { margin: 0 2px 0 5px; }
.q4 { margin-left: 3px; padding-right: 3px; }
.q4 .grip { margin-right: 7px; }
.inp { height: 17px; background: #fff; border: 1px solid #aaa; color: #777; font-size: 12px; line-height: 15px; padding-left: 3px; flex: none; }
.iw135 { width: 135px; }
.iw137 { width: 137px; margin-left: -2px; }
.divider { width: 5px; flex: none; background: #f0f0f0; border-right: 1px solid #ccc; }
.q5 { width: 182px; padding-left: 2px; }

/* status */
.status { height: 26px; flex: none; display: flex; align-items: stretch; background: #f0f0f0; border-top: 1px solid #d4d4d4; font-size: 11.500px; letter-spacing: -.3px; }
.msg { width: 393px; flex: none; padding: 5px 0 0 3px; }
.st-grip { width: 2px; margin: 3px 3px 0 0; flex: none; background: radial-gradient(circle, #888 0, #888 45%, transparent 60%) 0 0 / 2px 4px; }
.cell { flex: none; border: 1px solid #cfcfcf; border-bottom: 0; display: flex; align-items: center; justify-content: center; margin-top: 1px; }
.cell svg { width: 16px; height: 16px; }
.st-fill { flex: 1; }
.c27 { width: 27px; }
.c26 { width: 26px; }
.c30 { width: 30px; }
.c28 { width: 28px; }
.c105 { width: 105px; }
.c116 { width: 116px; }
.txt { justify-content: flex-start; padding-left: 3px; }
```
